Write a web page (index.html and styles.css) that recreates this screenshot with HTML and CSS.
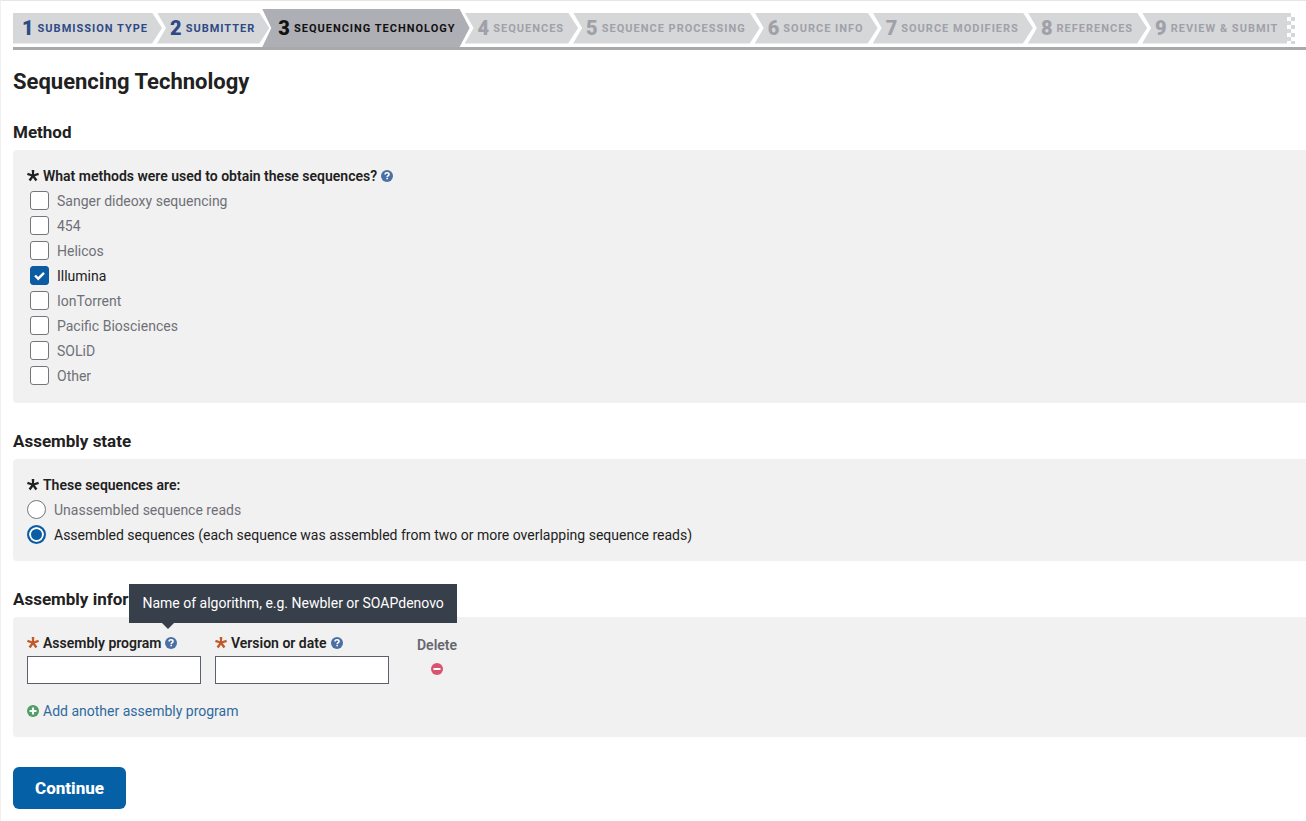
FILE: index.html
```html
<!DOCTYPE html>
<html lang="en">
<head>
    <meta charset="UTF-8">
    <meta name="viewport" content="width=device-width, initial-scale=1.0">
    <title>Sequencing Technology</title>
    <link rel="stylesheet" href="styles.css">
</head>
<body>
    <!-- shared icons -->
    <svg class="sprite" aria-hidden="true">
        <symbol id="star" viewBox="0 0 12 12">
            <path d="M4.7 0h2.6L7 4.2l4.2-1.4.8 2.3-4.2 1.2 2.6 3.5-2 1.5L6 7.7l-2.4 3.6-2-1.5 2.6-3.5L0 5.1l.8-2.3L5 4.2z" fill="currentColor"/>
        </symbol>
        <symbol id="help" viewBox="0 0 12 12">
            <circle cx="6" cy="6" r="6" fill="#4a70a3"/>
            <path d="M4.1 4.6C4.1 3.3 5 2.8 6 2.8s2 .6 2 1.6C8 5.6 6.2 5.6 6.2 7" fill="none" stroke="#fff" stroke-width="1.6"/>
            <path d="M5.4 7.8h1.6v1.5H5.4z" fill="#fff"/>
        </symbol>
        <symbol id="minus" viewBox="0 0 12 12">
            <circle cx="6" cy="6" r="6" fill="#d9536f"/>
            <path d="M2.5 5h7v2h-7z" fill="#fff"/>
        </symbol>
        <symbol id="plus" viewBox="0 0 12 12">
            <circle cx="6" cy="6" r="6" fill="#4f9e63"/>
            <path d="M6 2.5v7M2.5 6h7" stroke="#fff" stroke-width="2.2"/>
        </symbol>
    </svg>

    <nav class="wizard">
        <ol class="steps">
            <li class="step done first"><a href="#"><b>1</b>Submission type</a></li>
            <li class="step done"><a href="#"><b>2</b>Submitter</a></li>
            <li class="step cur"><span><b>3</b>Sequencing technology</span></li>
            <li class="step"><span><b>4</b>Sequences</span></li>
            <li class="step"><span><b>5</b>Sequence processing</span></li>
            <li class="step"><span><b>6</b>Source info</span></li>
            <li class="step"><span><b>7</b>Source modifiers</span></li>
            <li class="step"><span><b>8</b>References</span></li>
            <li class="step last"><span><b>9</b>Review &amp; submit</span></li>
            <li class="flag" aria-hidden="true"></li>
        </ol>
    </nav>

    <form class="content">
        <h1>Sequencing Technology</h1>

        <h2>Method</h2>
        <div class="panel">
            <fieldset class="checks">
                <legend>
                    <svg class="star"><use href="#star"/></svg>What methods were used to obtain these sequences?
                    <button type="button" class="help" aria-label="Help"><svg><use href="#help"/></svg></button>
                </legend>
                <label><input type="checkbox"><span>Sanger dideoxy sequencing</span></label>
                <label><input type="checkbox"><span>454</span></label>
                <label><input type="checkbox"><span>Helicos</span></label>
                <label><input type="checkbox" checked><span>Illumina</span></label>
                <label><input type="checkbox"><span>IonTorrent</span></label>
                <label><input type="checkbox"><span>Pacific Biosciences</span></label>
                <label><input type="checkbox"><span>SOLiD</span></label>
                <label><input type="checkbox"><span>Other</span></label>
            </fieldset>
        </div>

        <h2>Assembly state</h2>
        <div class="panel">
            <fieldset class="radios">
                <legend><svg class="star"><use href="#star"/></svg>These sequences are:</legend>
                <label><input type="radio" name="state"><span>Unassembled sequence reads</span></label>
                <label><input type="radio" name="state" checked><span>Assembled sequences (each sequence was assembled from two or more overlapping sequence reads)</span></label>
            </fieldset>
        </div>

        <h2>Assembly information</h2>
        <div class="panel">
            <div class="programs">
                <div class="field">
                    <div class="field-label">
                        <svg class="star required"><use href="#star"/></svg><label for="program">Assembly program</label>
                        <button type="button" class="help" aria-label="Help">
                            <svg><use href="#help"/></svg>
                            <span class="tooltip" role="tooltip">Name of algorithm, e.g. Newbler or SOAPdenovo</span>
                        </button>
                    </div>
                    <input type="text" id="program">
                </div>
                <div class="field">
                    <div class="field-label">
                        <svg class="star required"><use href="#star"/></svg><label for="version">Version or date</label>
                        <button type="button" class="help" aria-label="Help"><svg><use href="#help"/></svg></button>
                    </div>
                    <input type="text" id="version">
                </div>
                <div class="delete">
                    <span>Delete</span>
                    <button type="button" aria-label="Delete row"><svg><use href="#minus"/></svg></button>
                </div>
            </div>
            <a class="add" href="#"><svg><use href="#plus"/></svg>Add another assembly program</a>
        </div>

        <button type="submit" class="continue">Continue</button>
    </form>
</body>
</html>
```

FILE: styles.css
```css
*{
    margin: 0;
    padding: 0;
    box-sizing: border-box;
}
body{
    min-height: 100vh;
    padding: 8px 0 12px 12px;
    border-top: 1px solid #e6e6e6;
    border-left: 1px solid #f0f0f0;
    background: #fff;
    color: #212121;
    font: 14px/24px Roboto, "Liberation Sans", sans-serif;
}
button, input{
    font: inherit;
}
a{
    text-decoration: none;
}
svg{
    display: block;
    flex: none;
    width: 12px;
    height: 12px;
}
.sprite{
    display: none;
}

/* progress bar */
.wizard{
    border-bottom: 3px solid #a9a9ab;
}
.steps{
    display: flex;
    align-items: center;
    height: 38px;
    list-style: none;
}
.step{
    margin-left: -5px;
    padding: 0 14px 0 13px;
    height: 31px;
    line-height: 31px;
    background: #d6d7d9;
    color: #a0a1a8;
    font-size: 11px;
    font-weight: 700;
    letter-spacing: 1px;
    text-transform: uppercase;
    white-space: nowrap;
    clip-path: polygon(0 0, calc(100% - 10px) 0, 100% 50%, calc(100% - 10px) 100%, 0 100%, 9px 50%);
}
.step a, .step span{
    display: flex;
    align-items: center;
    color: inherit;
}
.step b{
    margin-right: 4px;
    font-size: 20px;
    letter-spacing: 0;
}
.step.done{
    color: #2e4a86;
}
.step.first{
    margin-left: 0;
    padding-left: 9px;
    clip-path: polygon(0 0, calc(100% - 10px) 0, 100% 50%, calc(100% - 10px) 100%, 0 100%);
}
.step.cur{
    margin-left: -7px;
    padding-left: 16px;
    height: 38px;
    line-height: 39px;
    background: #aeaeb5;
    color: #111;
}
.step.last{
    padding-right: 9px;
    clip-path: polygon(0 0, 100% 0, 100% 100%, 0 100%, 9px 50%);
}
.flag{
    width: 8px;
    height: 31px;
    background: repeating-conic-gradient(#fff 0 25%, #d6d7d9 0 50%) 0 0 / 8px 8px;
}

/* headings and panels */
h1{
    margin-top: 19px;
    font-size: 22px;
    font-weight: 700;
    line-height: 26px;
}
h2{
    margin: 27px 0 7px;
    font-size: 17px;
    font-weight: 700;
    line-height: 22px;
}
h1 + h2{
    margin-top: 26px;
}
.panel{
    padding: 14px;
    border-radius: 4px 0 0 4px;
    background: #f1f1f1;
}
fieldset{
    border: 0;
}
legend, .field-label{
    display: flex;
    align-items: center;
    gap: 4px;
    font-weight: 600;
}
.star.required{
    color: #c05a2a;
}
.help{
    position: relative;
    border: 0;
    background: none;
    cursor: pointer;
}

/* check boxes and radios */
fieldset label{
    display: flex;
    align-items: center;
    gap: 8px;
    height: 25px;
    color: #6f7077;
}
fieldset label:has(:checked){
    color: #212121;
}
.checks{
    padding-bottom: 1px;
}
.checks label{
    padding-left: 3px;
}
fieldset input{
    appearance: none;
    flex: none;
    width: 19px;
    height: 19px;
    border: 1px solid #75767c;
    border-radius: 3px;
    background: #fff;
}
.checks input:checked{
    border-color: #0b5ca3;
    background: #0b5ca3 url("data:image/svg+xml,%3Csvg xmlns='http://www.w3.org/2000/svg' viewBox='0 0 17 17'%3E%3Cpath d='M4 8.5l3.2 3.2L13 5.8' fill='none' stroke='white' stroke-width='2.4'/%3E%3C/svg%3E");
}
.radios input{
    border-radius: 50%;
}
.radios input:checked{
    border: 2px solid #0b5ca3;
    background: #0b5ca3;
    box-shadow: inset 0 0 0 2px #fff;
}

/* assembly programs */
.programs{
    display: flex;
    gap: 14px;
}
.field{
    width: 174px;
}
.field input{
    display: block;
    width: 100%;
    height: 28px;
    margin-top: 1px;
    padding: 0 6px;
    border: 1px solid #5b616b;
    background: #fff;
}
.delete{
    display: flex;
    flex-direction: column;
    align-items: center;
    margin-left: 14px;
    padding-top: 2px;
    color: #66676e;
    font-weight: 600;
}
.delete button{
    padding: 6px;
    border: 0;
    background: none;
}
.add{
    display: flex;
    align-items: center;
    gap: 4px;
    width: fit-content;
    margin-top: 15px;
    color: #2f6a9f;
}
.tooltip{
    position: absolute;
    bottom: 26px;
    left: -36px;
    padding: 0 13px;
    background: #373f4a;
    color: #fff;
    font-weight: 400;
    line-height: 39px;
    white-space: nowrap;
}
.tooltip::after{
    content: "";
    position: absolute;
    top: 100%;
    left: 33px;
    border: 6px solid transparent;
    border-top-color: #373f4a;
    border-bottom: 0;
}
.continue{
    display: block;
    margin-top: 30px;
    padding: 9px 22px;
    border: 0;
    border-radius: 6px;
    background: #0560a6;
    color: #fff;
    font-size: 17px;
    font-weight: 800;
}
```
